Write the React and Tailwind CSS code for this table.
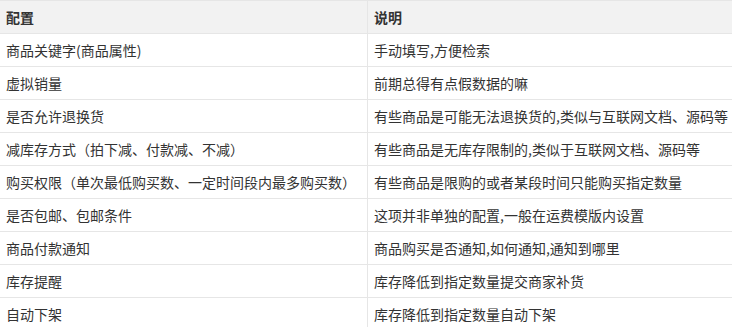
export default function App() {
  const rows = [
    ["商品关键字(商品属性)", "手动填写,方便检索"],
    ["虚拟销量", "前期总得有点假数据的嘛"],
    ["是否允许退换货", "有些商品是可能无法退换货的,类似与互联网文档、源码等"],
    ["减库存方式（拍下减、付款减、不减）", "有些商品是无库存限制的,类似于互联网文档、源码等"],
    ["购买权限（单次最低购买数、一定时间段内最多购买数）", "有些商品是限购的或者某段时间只能购买指定数量"],
    ["是否包邮、包邮条件", "这项并非单独的配置,一般在运费模版内设置"],
    ["商品付款通知", "商品购买是否通知,如何通知,通知到哪里"],
    ["库存提醒", "库存降低到指定数量提交商家补货"],
    ["自动下架", "库存降低到指定数量自动下架"],
  ];
  return (
    <div
      className="w-[732px] h-[327px] overflow-hidden bg-white text-[14px] text-[#333333]"
      style={{ fontFamily: '"Noto Sans CJK SC", "Noto Sans", sans-serif' }}
    >
      <div className="grid grid-cols-[367px_1fr] border-t border-b border-[#e6e6e6] bg-[#f2f2f2] font-bold">
        <div className="h-[32px] flex items-center px-[6px]">配置</div>
        <div className="h-[32px] flex items-center px-[6px] border-l border-[#e6e6e6]">说明</div>
      </div>
      {rows.map(([a, b], i) => (
        <div key={i} className="grid grid-cols-[367px_1fr] border-b border-[#e6e6e6]">
          <div className="h-[32px] flex items-center px-[6px] whitespace-nowrap">{a}</div>
          <div className="h-[32px] flex items-center px-[6px] border-l border-[#e6e6e6] whitespace-nowrap">{b}</div>
        </div>
      ))}
    </div>
  );
}
